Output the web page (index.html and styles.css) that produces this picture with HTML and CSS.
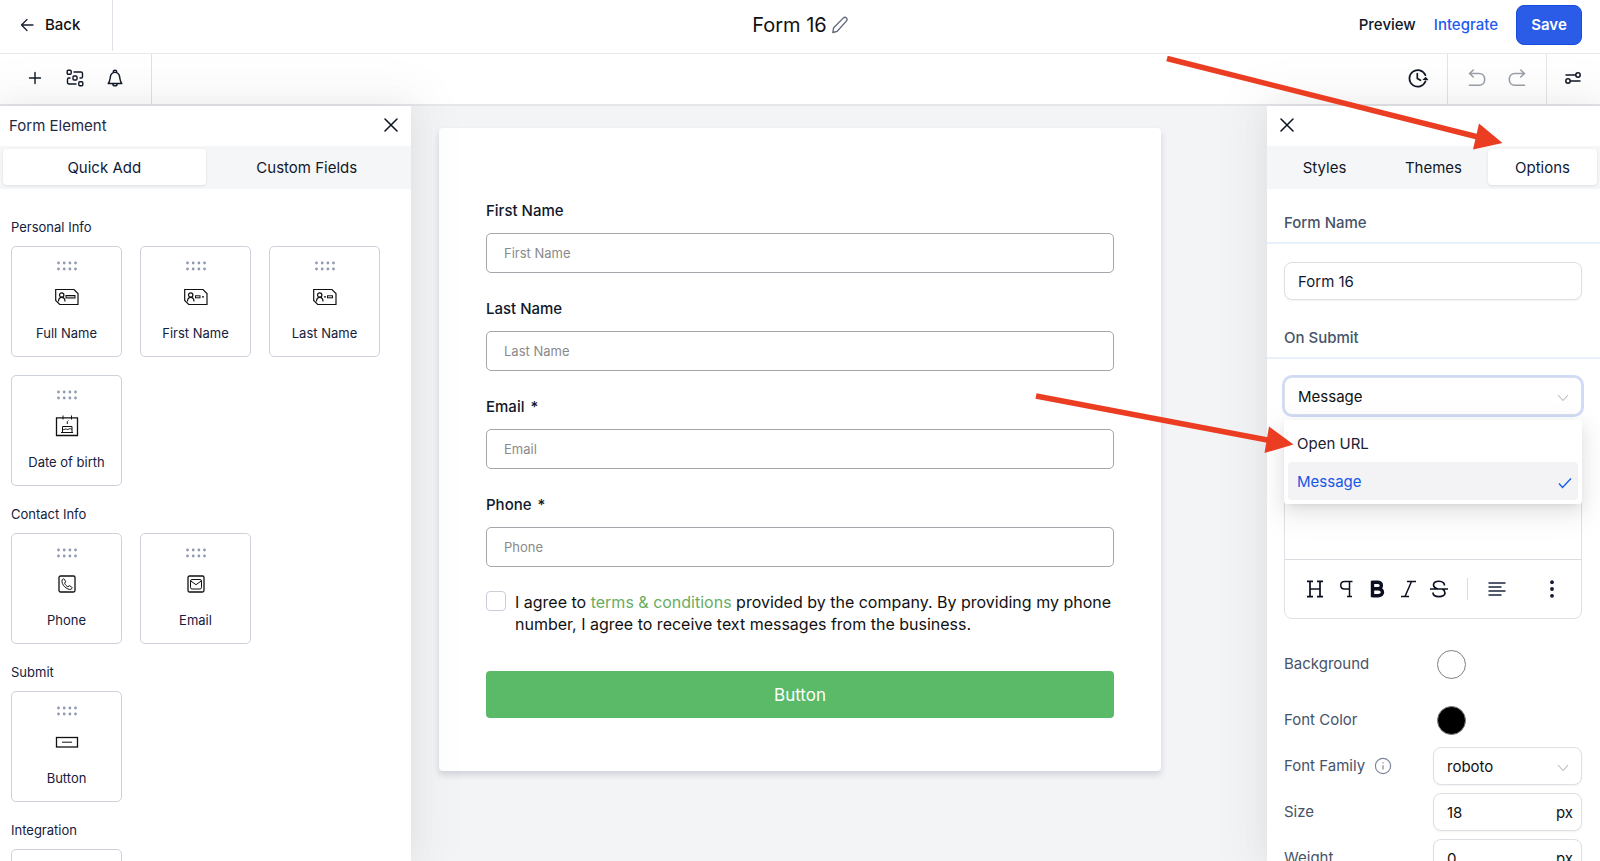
FILE: index.html
```html
<!DOCTYPE html>
<html lang="en">
<head>
<meta charset="utf-8">
<title>Form 16</title>
<link rel="stylesheet" href="styles.css">
</head>
<body>
<svg class="defs" aria-hidden="true">
  <symbol id="grip" viewBox="0 0 20 10"><g fill="#8e9bb3"><circle cx="1.5" cy="2" r="1.4"/><circle cx="7.2" cy="2" r="1.4"/><circle cx="12.9" cy="2" r="1.4"/><circle cx="18.5" cy="2" r="1.4"/><circle cx="1.5" cy="8" r="1.4"/><circle cx="7.2" cy="8" r="1.4"/><circle cx="12.9" cy="8" r="1.4"/><circle cx="18.5" cy="8" r="1.4"/></g></symbol>
  <symbol id="close" viewBox="0 0 14 14"><path d="M1 1l12 12M13 1L1 13" fill="none" stroke="currentColor" stroke-width="1.5" stroke-linecap="round"/></symbol>
  <symbol id="idcard" viewBox="0 0 24 22"><path d="M.7 3.500h18.300l4 4v11h-18.300l-4-4z" fill="none" stroke="#111" stroke-width="1.200"/><circle cx="6.700" cy="9" r="2.200" fill="none" stroke="#111" stroke-width="1.200"/><path d="M3.500 15.500c0-5.500 6.500-5.500 6.500 0" fill="none" stroke="#111" stroke-width="1.200"/></symbol>
</svg>

<div class="app">
  <header class="header">
    <button class="back" type="button">
      <svg width="14" height="14" viewBox="0 0 14 14"><path d="M13 7H2M7 1.500L1.500 7 7 12.500" fill="none" stroke="#1b2030" stroke-width="1.300" stroke-linecap="round" stroke-linejoin="round"/></svg>
      Back
    </button>
    <div class="title">
      <h1 class="title-text">Form 16</h1>
      <button class="plain" type="button" aria-label="Rename form"><svg width="16" height="18" viewBox="0 0 16 18"><path d="M.8 16.500l.7-4.500L11.400 1.900c2.300-1.700 4.700.7 3.200 3L5.200 15.300z" fill="none" stroke="#5c6679" stroke-width="1.300" stroke-linejoin="round"/></svg></button>
    </div>
    <nav class="actions">
      <a class="action" href="#">Preview</a>
      <a class="action action-blue" href="#">Integrate</a>
      <button class="save" type="button">Save</button>
    </nav>
  </header>

  <div class="toolbar">
    <div class="tools tools-left">
      <button class="plain" type="button" aria-label="Add"><svg width="18" height="18" viewBox="0 0 18 18"><path d="M9 3.500v11M3.500 9h11" stroke="#111827" stroke-width="1.400" stroke-linecap="round"/></svg></button>
      <button class="plain" type="button" aria-label="Workflow"><svg width="18" height="18" viewBox="0 0 18 18" fill="none" stroke="#111827" stroke-width="1.400" stroke-linejoin="round"><rect x="1.200" y="1.200" width="4" height="4" rx="1"/><rect x="12.800" y="12.800" width="4" height="4" rx="1"/><rect x="7" y="7" width="4" height="4" rx="1"/><path d="M7.500 3H15c1 0 1.500.5 1.500 1.500v3.300c0 .8-.5 1.200-1.300 1.200H13.500M10.500 15H3c-1 0-1.500-.5-1.500-1.500v-3.300c0-.8.5-1.200 1.300-1.200H4.500"/></svg></button>
      <button class="plain" type="button" aria-label="Notifications"><svg width="18" height="18" viewBox="0 0 18 18" fill="none" stroke="#111827" stroke-width="1.400" stroke-linejoin="round"><path d="M2.200 14.500c2-2.500 1.600-4 2.200-7C5 4.700 6.700 3.400 9 3.400s4 1.300 4.600 4.100c.6 3 .2 4.500 2.200 7zM7.300 3.500V2.700C7.300 1.800 8 1.200 9 1.200s1.700.6 1.700 1.500v.8M6.800 14.700c0 2.900 4.400 2.900 4.400 0"/></svg></button>
    </div>
    <div class="tools tools-history">
      <button class="plain" type="button" aria-label="Version history"><svg width="22" height="20" viewBox="0 0 22 20"><path d="M18.400 7.200A8.300 8.300 0 1 0 18.500 13.300" fill="none" stroke="#111827" stroke-width="1.700" stroke-linecap="round"/><path d="M10.300 5.500v5l3.200 1.800" fill="none" stroke="#111827" stroke-width="1.700" stroke-linecap="round" stroke-linejoin="round"/><path d="M15.300 11.900l3.500-3.100 2.700 3.400z" fill="#111827"/></svg></button>
    </div>
    <div class="tools tools-undo">
      <button class="plain" type="button" aria-label="Undo"><svg width="18" height="18" viewBox="0 0 18 18"><path d="M5.300 1L1.500 4.500 5.300 8M1.800 4.500H11c7.600 0 7.600 11.800 0 11.800H1.500" fill="none" stroke="#9a9fa9" stroke-width="1.600" stroke-linecap="round" stroke-linejoin="round"/></svg></button>
      <button class="plain" type="button" aria-label="Redo"><svg width="18" height="18" viewBox="0 0 18 18"><path d="M12.700 1l3.800 3.500L12.700 8M16.200 4.500H7c-7.600 0-7.600 11.800 0 11.800h9.500" fill="none" stroke="#9a9fa9" stroke-width="1.600" stroke-linecap="round" stroke-linejoin="round"/></svg></button>
    </div>
    <div class="tools tools-settings">
      <button class="plain" type="button" aria-label="Form settings"><svg width="16" height="14" viewBox="0 0 16 14" fill="none" stroke="#111827" stroke-width="1.500" stroke-linecap="round"><circle cx="13" cy="4" r="2.200"/><circle cx="3" cy="10" r="2.200"/><path d="M1 4h9.500M5.500 10H15"/></svg></button>
    </div>
  </div>

  <div class="workspace">
    <aside class="panel panel-left">
      <div class="panel-head">
        <h2 class="panel-title">Form Element</h2>
        <button class="plain" type="button" aria-label="Close form elements"><svg width="14" height="14"><use href="#close"/></svg></button>
      </div>
      <div class="tabs tabs-two">
        <button class="tab tab-on" type="button">Quick Add</button>
        <button class="tab" type="button">Custom Fields</button>
      </div>
      <div class="elements">
        <section class="group">
          <h3 class="group-title">Personal Info</h3>
          <div class="tiles">
            <button class="tile" type="button"><svg width="20" height="10"><use href="#grip"/></svg><svg class="tile-icon" viewBox="0 0 24 22"><use href="#idcard"/><rect x="11" y="9.500" width="9" height="2.500" fill="#bbb" stroke="#111"/></svg>Full Name</button>
            <button class="tile" type="button"><svg width="20" height="10"><use href="#grip"/></svg><svg class="tile-icon" viewBox="0 0 24 22"><use href="#idcard"/><rect x="11.500" y="9.800" width="4.500" height="2" fill="none" stroke="#111"/><circle cx="19" cy="10.800" r=".9"/></svg>First Name</button>
            <button class="tile" type="button"><svg width="20" height="10"><use href="#grip"/></svg><svg class="tile-icon" viewBox="0 0 24 22"><use href="#idcard"/><circle cx="12" cy="10.800" r=".9"/><rect x="14.500" y="9.800" width="5" height="2" fill="none" stroke="#111"/></svg>Last Name</button>
            <button class="tile" type="button"><svg width="20" height="10"><use href="#grip"/></svg><svg class="tile-icon" viewBox="0 0 24 22" fill="none" stroke="#111"><path d="M1.500 2.800h21v17.700h-21z" stroke-width="1.300"/><path d="M8 .5v4M16.500 .5v4M12.300 9V6.500l1-1M6 17.500h12M7.500 17v-5.500h9.500v5.500M7.500 14c1.200 1.400 2.200 0 3.200 0s2 1.300 3.200 0 2 .7 3.100 0"/></svg>Date of birth</button>
          </div>
        </section>
        <section class="group">
          <h3 class="group-title">Contact Info</h3>
          <div class="tiles">
            <button class="tile" type="button"><svg width="20" height="10"><use href="#grip"/></svg><svg class="tile-icon" viewBox="0 0 24 22" fill="none" stroke="#111"><rect x="4" y="3" width="16" height="16" rx="1.500" stroke-width="1.300"/><path d="M7.200 6.800c.8-1.300 1.900-1.300 2.500 0l.9 1.900-1 1.500c.8 1.800 1.900 2.800 3.200 3.500l1.700-1 1.900 1.100c1 .7.800 1.800-.4 2.500C12.500 17.500 5.500 11.500 7.200 6.800z"/></svg>Phone</button>
            <button class="tile" type="button"><svg width="20" height="10"><use href="#grip"/></svg><svg class="tile-icon" viewBox="0 0 24 22" fill="none" stroke="#111"><rect x="4" y="3" width="16" height="16" rx="1.500" stroke-width="1.300"/><rect x="6.500" y="6.500" width="11" height="9.500" rx="1.500"/><path d="M6.800 8l5.200 3.700L17.200 8"/></svg>Email</button>
          </div>
        </section>
        <section class="group">
          <h3 class="group-title">Submit</h3>
          <div class="tiles">
            <button class="tile" type="button"><svg width="20" height="10"><use href="#grip"/></svg><svg class="tile-icon" viewBox="0 0 24 22" fill="none" stroke="#111"><rect x="1.500" y="6.500" width="21" height="9.500" stroke-width="1.300"/><path d="M7 11.200h10"/></svg>Button</button>
          </div>
        </section>
        <section class="group">
          <h3 class="group-title">Integration</h3>
          <div class="tiles">
            <button class="tile" type="button" aria-label="Integration element"></button>
          </div>
        </section>
      </div>
    </aside>

    <main class="canvas">
      <form class="form">
        <div class="field"><label class="field-label" for="first">First Name</label><input class="field-input" id="first" type="text" placeholder="First Name"></div>
        <div class="field"><label class="field-label" for="last">Last Name</label><input class="field-input" id="last" type="text" placeholder="Last Name"></div>
        <div class="field"><label class="field-label" for="email">Email <span class="required">*</span></label><input class="field-input" id="email" type="email" placeholder="Email"></div>
        <div class="field"><label class="field-label" for="phone">Phone <span class="required">*</span></label><input class="field-input" id="phone" type="tel" placeholder="Phone"></div>
        <div class="consent">
          <input class="check" id="agree" type="checkbox">
          <label class="consent-text" for="agree">I agree to <a class="terms" href="#">terms &amp; conditions</a> provided by the company. By providing my phone number, I agree to receive text messages from the business.</label>
        </div>
        <button class="submit" type="button">Button</button>
      </form>
    </main>

    <aside class="panel panel-right">
      <div class="panel-head panel-head-right">
        <button class="plain" type="button" aria-label="Close options"><svg width="14" height="14"><use href="#close"/></svg></button>
      </div>
      <div class="tabs tabs-three">
        <button class="tab" type="button">Styles</button>
        <button class="tab" type="button">Themes</button>
        <button class="tab tab-on" type="button">Options</button>
      </div>
      <label class="option-head" for="form-name">Form Name</label>
      <div class="option-body"><input class="control" id="form-name" type="text" value="Form 16"></div>
      <label class="option-head option-head-next" for="on-submit">On Submit</label>
      <div class="option-body">
        <div class="picker">
          <select class="control control-select control-focus" id="on-submit"><option>Open URL</option><option selected>Message</option></select>
          <svg class="chevron" width="12" height="8" viewBox="0 0 12 8"><path d="M1 1l5 5.500L11 1" fill="none" stroke="#b9bcc3" stroke-width="1.100"/></svg>
          <div class="menu" role="listbox" aria-label="On Submit">
            <button class="menu-item" type="button" role="option">Open URL</button>
            <button class="menu-item menu-item-on" type="button" role="option" aria-selected="true">Message
              <svg class="tick" width="14" height="12" viewBox="0 0 14 12"><path d="M1 6.500l3.500 4L13 1.500" fill="none" stroke="#155eef" stroke-width="1.400"/></svg></button>
          </div>
        </div>
        <div class="editor">
          <div class="editor-area" contenteditable="true" role="textbox" aria-label="Message"></div>
          <div class="editor-bar">
            <button class="format" type="button" aria-label="Heading"><svg width="18" height="18" viewBox="0 0 18 18" fill="none" stroke="#0b1020" stroke-width="1.700"><path d="M4 1v16M14 1v16M4 9h10M1 1.300h6M11 1.300h6M1 16.700h6M11 16.700h6"/></svg></button>
            <button class="format" type="button" aria-label="Paragraph"><svg width="18" height="18" viewBox="0 0 18 18" fill="none" stroke="#0b1020" stroke-width="1.500"><path d="M15.500 1.500H7.500c-5 0-5 7.500 0 7.500H12.500M12.500 1.500v15M10 16.500h5"/></svg></button>
            <button class="format" type="button" aria-label="Bold"><svg width="18" height="18" viewBox="0 0 18 18" fill="none" stroke="#0b1020" stroke-width="3.400"><path d="M4.500 2.200H10c4.500 0 4.500 6.600 0 6.600H4.500M10 8.800c6 0 6 6.900 0 6.900H4.500M4.500 .8v16.400" stroke-linejoin="round"/></svg></button>
            <button class="format" type="button" aria-label="Italic"><svg width="18" height="18" viewBox="0 0 18 18" fill="none" stroke="#0b1020" stroke-width="1.500"><path d="M8 1.500h9M2 16.500h8M12.500 1.500L6 16.500"/></svg></button>
            <button class="format" type="button" aria-label="Strikethrough"><svg width="20" height="18" viewBox="0 0 20 18" fill="none" stroke="#0b1020" stroke-width="1.700"><path d="M1 9h18M15.500 5.500c0-5.500-11-5.500-11-.8C4.500 7 6.500 8.300 9 9M4 12.500c0 5.500 12 5.500 12 .5 0-1.700-.8-3-2.500-4"/></svg></button>
            <span class="editor-rule"></span>
            <button class="format" type="button" aria-label="Align left"><svg width="18" height="14" viewBox="0 0 18 14" stroke="#1b2440" stroke-width="1.500"><path d="M.5 1h17M.5 5h13M.5 9h17M.5 13h13"/></svg></button>
            <button class="format format-more" type="button" aria-label="More"><svg width="4" height="18" viewBox="0 0 4 18" fill="#111a33"><circle cx="2" cy="2.200" r="1.900"/><circle cx="2" cy="9" r="1.900"/><circle cx="2" cy="15.800" r="1.900"/></svg></button>
          </div>
        </div>
        <div class="settings">
          <div class="setting setting-color"><span class="setting-label">Background</span><button class="swatch" type="button" aria-label="Background colour"></button></div>
          <div class="setting setting-color"><span class="setting-label">Font Color</span><button class="swatch swatch-black" type="button" aria-label="Font colour"></button></div>
          <div class="setting">
            <label class="setting-label" for="family">Font Family
              <svg width="18" height="18" viewBox="0 0 18 18" fill="none" stroke="#7d879b" stroke-width="1.200"><circle cx="9" cy="9" r="7.600"/><path d="M9 8.300v4.200M9 5.200v1.400"/></svg></label>
            <div class="picker">
              <select class="control control-select" id="family"><option>roboto</option></select>
              <svg class="chevron" width="12" height="8" viewBox="0 0 12 8"><path d="M1 1l5 5.500L11 1" fill="none" stroke="#b9bcc3" stroke-width="1.100"/></svg>
            </div>
          </div>
          <div class="setting"><label class="setting-label" for="size">Size</label><div class="control control-unit"><input class="number" id="size" type="text" value="18">px</div></div>
          <div class="setting"><label class="setting-label" for="weight">Weight</label><div class="control control-unit"><input class="number" id="weight" type="text" value="0">px</div></div>
        </div>
      </div>
    </aside>
  </div>
  <svg class="arrows" width="1600" height="861" viewBox="0 0 1600 861" aria-hidden="true" fill="#eb3d22" stroke="#eb3d22">
    <path d="M1167 58.500L1478 137M1036 396L1270 440.500" stroke-width="5.500"/>
    <path d="M1502.500 143L1479 123.500L1473 149.500zM1293.500 444.500L1269 426.500L1264.500 453z" stroke="none"/>
  </svg>
</div>
</body>
</html>
```
FILE: styles.css
```css
*, *::before, *::after { box-sizing: border-box; }
body { margin: 0; font-family: Inter, "Liberation Sans", sans-serif; font-size: 15px; color: #0f172a; background: #fff; }
button, input, select { font: inherit; color: inherit; }
button { padding: 0; border: 0; background: none; cursor: pointer; }
h1, h2, h3 { margin: 0; font-weight: 400; }
a { text-decoration: none; color: inherit; }
svg { display: block; flex: none; }
.defs { position: absolute; width: 0; height: 0; }
.plain { display: flex; }

.app { position: relative; display: flex; flex-direction: column; height: 100vh; overflow: hidden; }

.header { display: grid; grid-template-columns: 1fr auto 1fr; align-items: start; height: 54px; flex: none; border-bottom: 1px solid #e8eaed; }
.back { display: flex; align-items: center; gap: 11px; justify-self: start; width: 113px; height: 51px; padding: 0 0 2px 20px; border-right: 1px solid #dfe2e8; font-weight: 500; color: #111; }
.title { display: flex; align-items: center; gap: 5px; height: 49px; }
.title-text { font-size: 20px; line-height: 28px; color: #111; }
.actions { display: flex; align-items: center; justify-content: flex-end; gap: 18px; height: 49px; padding-right: 18px; font-weight: 500; }
.action { color: #111827; }
.action-blue { color: #1f5af0; }
.save { width: 66px; height: 40px; border: 1px solid #164ddf; border-radius: 8px; background: #2a5ce8; color: #fff; font-weight: 600; }

.toolbar { display: flex; height: 52px; flex: none; border-bottom: 2px solid #e5e7ea; }
.tools { display: flex; align-items: center; padding-bottom: 2px; }
.tools-left { gap: 22px; width: 152px; padding-left: 26px; border-right: 1px solid #dfe1e5; }
.tools-history { margin-left: auto; padding-right: 18px; }
.tools-undo { gap: 22px; width: 99px; padding-left: 20px; border-left: 1px solid #e2e4e8; }
.tools-settings { width: 54px; padding-left: 18px; border-left: 1px solid #e2e4e8; }

.workspace { display: flex; flex: 1; min-height: 0; }
.panel { position: relative; z-index: 1; flex: none; overflow: hidden; background: #fff; box-shadow: 0 0 28px rgba(0,0,0,.05), 0 0 48px 16px rgba(0,0,0,.04); }
.panel-left { width: 411px; }
.panel-right { width: 333px; }
.panel-head { display: flex; align-items: center; justify-content: space-between; height: 40px; padding: 0 13px 2px 9px; color: #0b1020; }
.panel-head-right { padding-left: 13px; }
.panel-title { font-size: 15px; color: #1e2944; }
.tabs { display: grid; padding: 3px 3px 4px; background: #f5f6f8; }
.tabs-two { grid-template-columns: repeat(2, 1fr); }
.tabs-three { grid-template-columns: repeat(3, 1fr); }
.tab { height: 36px; border-radius: 4px; color: #111827; }
.tab-on { background: #fff; box-shadow: 0 1px 3px rgba(0,0,0,.1); color: #101a38; }

.elements { padding: 28px 11px 0; }
.group-title { margin-bottom: 9px; font-size: 13px; line-height: 20px; color: #15203c; }
.group + .group { padding-top: 18px; }
.tiles { display: flex; flex-wrap: wrap; gap: 18px; }
.tile { display: flex; flex-direction: column; align-items: center; width: 111px; height: 111px; padding-top: 14px; border: 1px solid #cdd1dc; border-radius: 5px; font-size: 13px; line-height: 20px; color: #15203c; }
.tile-icon { width: 24px; height: 22px; margin: 15px 0; }

.canvas { flex: 1; min-width: 0; padding: 22px 106px 0 28px; background: #f3f4f6; }
.form { padding: 71px 47px 53px; border-radius: 4px; background: #fff; box-shadow: 0 4px 6px rgba(30,41,70,.16); }
.field { display: flex; flex-direction: column; gap: 11px; margin-bottom: 24px; }
.field-label { line-height: 23px; font-weight: 500; color: #0f172a; }
.required { margin-left: 2px; }
.field-input { width: 100%; height: 40px; padding: 0 17px; border: 1px solid #a4a6ab; border-radius: 5px; background: #fff; font-size: 13px; }
.field-input::placeholder { color: #8a8a8a; opacity: 1; }
.consent { display: flex; gap: 9px; }
.check { appearance: none; flex: none; width: 20px; height: 20px; margin: 0; border: 1px solid #c8cedb; border-radius: 4px; background: #fff; }
.consent-text { font-size: 16px; line-height: 22px; color: #111; }
.terms { color: #68ad62; }
.submit { width: 100%; height: 47px; margin-top: 36px; border-radius: 4px; background: #5aba68; color: #fff; font-size: 17px; }

.option-head { display: block; padding: 23px 17px 8px; border-bottom: 2px solid #e6f1fc; line-height: 22px; font-weight: 500; color: #475369; }
.option-head-next { padding-top: 27px; }
.option-body { padding: 18px 18px 0 17px; }
.control { display: block; width: 100%; height: 38px; padding: 0 13px; border: 1px solid #dcdfe4; border-radius: 8px; outline: 0; background: #fff; color: #111a33; box-shadow: 0 1px 2px rgba(16,24,40,.05); }
.control-select { appearance: none; color: #111; }
.control-focus { box-shadow: 0 0 0 2px #cfdbfb; }
.picker { position: relative; }
.chevron { position: absolute; right: 13px; top: 17px; pointer-events: none; }
.menu { position: absolute; z-index: 2; top: 43px; left: 0; right: 0; padding: 4px; border-radius: 3px; background: #fff; box-shadow: 0 3px 6px -4px rgba(0,0,0,.12), 0 6px 16px rgba(0,0,0,.08), 0 9px 28px 8px rgba(0,0,0,.05); }
.menu-item { display: flex; align-items: center; justify-content: space-between; width: 100%; height: 38px; padding: 0 6px 0 9px; border-radius: 4px; color: #1c2130; }
.menu-item-on { background: #f3f3f5; color: #1656e8; }
.tick { margin-top: 4px; }
.editor { margin-top: 18px; border: 1px solid #dfe1e6; border-radius: 8px; }
.editor-area { height: 125px; }
.editor-bar { display: flex; align-items: center; height: 59px; padding: 0 14px; border-top: 1px solid #d9dce1; }
.format { display: flex; align-items: center; justify-content: center; width: 31px; height: 31px; }
.editor-rule { width: 1px; height: 22px; margin: 0 13px; background: #d9dce2; }
.format-more { margin-left: auto; }

.settings { display: flex; flex-direction: column; gap: 8px; padding-top: 26px; }
.setting { display: grid; grid-template-columns: 149px minmax(0, 1fr); align-items: center; min-height: 38px; }
.setting-color + .setting-color { margin-top: 10px; }
.setting-label { display: flex; align-items: center; gap: 9px; line-height: 22px; color: #475369; }
.swatch { width: 29px; height: 29px; margin-left: 4px; border: 1px solid #808080; border-radius: 50%; background: #fff; }
.swatch-black { background: #000; }
.control-unit { display: flex; align-items: center; padding-right: 8px; color: #111; }
.number { flex: 1; min-width: 0; padding: 0; border: 0; outline: 0; background: none; }

.arrows { position: absolute; z-index: 5; top: 0; left: 0; pointer-events: none; }
```
